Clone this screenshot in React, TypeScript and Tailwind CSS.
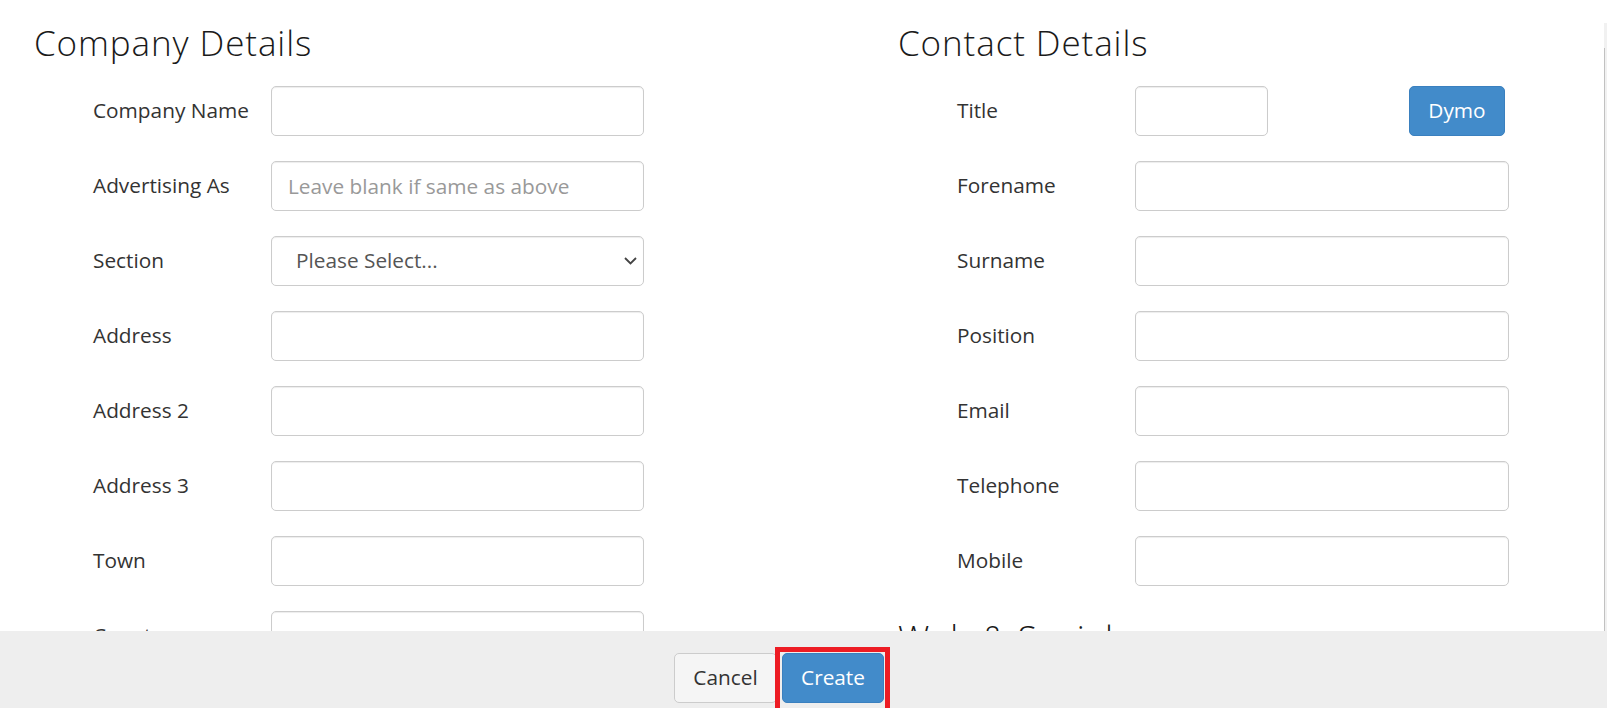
import React from 'react';

const companyFields = ['Company Name', 'Advertising As', 'Section', 'Address', 'Address 2', 'Address 3', 'Town', 'County'];
const contactFields = ['Forename', 'Surname', 'Position', 'Email', 'Telephone', 'Mobile'];

const inputCls =
  'h-[50px] rounded-[5px] border border-[#cccccc] bg-white px-[16px] text-[20.8px] text-[#555555] shadow-[inset_0_1px_1px_rgba(0,0,0,0.075)] outline-none placeholder:text-[#999999]';

const Row: React.FC<{ label: string; children: React.ReactNode }> = ({ label, children }) => (
  <div className="flex items-center pl-[59px]">
    <label className="w-[178px] shrink-0 text-[20.8px] text-[#333333]">{label}</label>
    {children}
  </div>
);

const Heading: React.FC<{ children: React.ReactNode }> = ({ children }) => (
  <h3 className="h-[37px] text-[35px] font-light leading-[37px] tracking-[0.9px] text-[#1a1a1a]">{children}</h3>
);

export default function App() {
  return (
    <div className="flex h-[708px] w-full flex-col overflow-hidden bg-white font-['Open_Sans','Liberation_Sans',sans-serif]">
      {/* Scrolling body */}
      <div className="flex h-[631px] shrink-0 overflow-hidden">
        <div className="grid flex-1 grid-cols-[864px_1fr] pl-[34px] pt-[24px]">
          {/* Company details */}
          <div>
            <Heading>Company Details</Heading>
            <div className="mt-[25px] flex flex-col gap-[25px]">
              {companyFields.map(f => (
                <Row key={f} label={f}>
                  {f === 'Section' ? (
                    <div className="relative w-[373px]">
                      <select className={`${inputCls} w-full appearance-none pl-[24px]`} defaultValue="">
                        <option value="">Please Select...</option>
                      </select>
                      <svg
                        className="pointer-events-none absolute right-[7px] top-[21px] h-[8px] w-[13px]"
                        viewBox="0 0 13 8"
                        fill="none"
                        stroke="#444444"
                        strokeWidth="1.8"
                      >
                        <path d="M1 1l5.5 5.5L12 1" />
                      </svg>
                    </div>
                  ) : (
                    <input
                      className={`${inputCls} w-[373px]`}
                      placeholder={f === 'Advertising As' ? 'Leave blank if same as above' : ''}
                    />
                  )}
                </Row>
              ))}
            </div>
          </div>

          {/* Contact details */}
          <div>
            <Heading>Contact Details</Heading>
            <div className="mt-[25px] flex flex-col gap-[25px]">
              <Row label="Title">
                <input className={`${inputCls} w-[133px]`} />
                <button className="ml-[141px] h-[50px] w-[96px] rounded-[5px] border border-[#3a80bf] bg-[#428bca] text-[20.8px] text-white">
                  Dymo
                </button>
              </Row>
              {contactFields.map(f => (
                <Row key={f} label={f}>
                  <input className={`${inputCls} w-[374px]`} />
                </Row>
              ))}
            </div>
            <div className="mt-[33px]">
              <Heading>Web &amp; Social</Heading>
            </div>
          </div>
        </div>

        {/* Scrollbar edge */}
        <div className="mt-[23px] flex w-[3px] shrink-0 flex-col bg-[#f1f1f1]">
          <div className="h-[25px]" />
          <div className="flex-1 border-l border-[#c1c1c1]" />
        </div>
      </div>

      {/* Footer */}
      <div className="flex h-[90px] shrink-0 justify-center bg-[#eeeeee] pr-[49px] pt-[22px]">
        <button className="h-[50px] w-[103px] rounded-[5px] border border-[#cccccc] bg-[#f5f5f5] text-[20.8px] text-[#333333]">
          Cancel
        </button>
        <div className="relative ml-[5px]">
          <button className="h-[50px] w-[102px] rounded-[5px] border border-[#3a80bf] bg-[#428bca] text-[20.8px] text-white">
            Create
          </button>
          <span className="pointer-events-none absolute -bottom-[6px] -left-[7px] -right-[6px] -top-[6px] border-[5px] border-[#ed1c24]" />
        </div>
      </div>
    </div>
  );
}
